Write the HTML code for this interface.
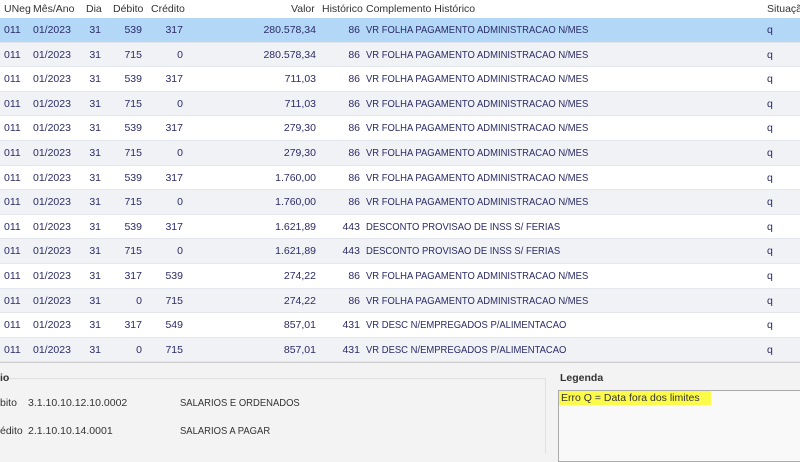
<!DOCTYPE html>
<html><head><style>
body{margin:0;width:800px;height:454px;overflow:hidden;background:#f3f3f3;font-family:"Liberation Sans",sans-serif;font-size:10.5px;color:#2b2b66;position:relative}
.hdr{position:absolute;left:0;top:0;width:800px;height:18px;background:#fff;color:#333}
.row{position:absolute;left:0;width:800px;height:24.6px;line-height:24.6px;border-bottom:1px solid #e4e6ee;box-sizing:border-box}
.c{position:absolute;white-space:nowrap}
.r{text-align:right}
.sq{transform:scaleX(0.9);transform-origin:left center}
.bot{position:absolute;color:#333;white-space:nowrap}
</style></head><body>
<div class="hdr">
<span class="c" style="left:4px;top:3px">UNeg</span>
<span class="c" style="left:33px;top:3px">Mês/Ano</span>
<span class="c" style="left:86px;top:3px">Dia</span>
<span class="c" style="left:113px;top:3px">Débito</span>
<span class="c" style="left:151px;top:3px">Crédito</span>
<span class="c" style="left:291px;top:3px">Valor</span>
<span class="c" style="left:322px;top:3px">Histórico</span>
<span class="c" style="left:366px;top:3px">Complemento Histórico</span>
<span class="c" style="left:767px;top:3px">Situação</span>
</div>
<div id="rows"></div>
<script>
var d=[["539","317","280.578,34","86","VR FOLHA PAGAMENTO ADMINISTRACAO N/MES"],["715","0","280.578,34","86","VR FOLHA PAGAMENTO ADMINISTRACAO N/MES"],["539","317","711,03","86","VR FOLHA PAGAMENTO ADMINISTRACAO N/MES"],["715","0","711,03","86","VR FOLHA PAGAMENTO ADMINISTRACAO N/MES"],["539","317","279,30","86","VR FOLHA PAGAMENTO ADMINISTRACAO N/MES"],["715","0","279,30","86","VR FOLHA PAGAMENTO ADMINISTRACAO N/MES"],["539","317","1.760,00","86","VR FOLHA PAGAMENTO ADMINISTRACAO N/MES"],["715","0","1.760,00","86","VR FOLHA PAGAMENTO ADMINISTRACAO N/MES"],["539","317","1.621,89","443","DESCONTO PROVISAO DE INSS S/ FERIAS"],["715","0","1.621,89","443","DESCONTO PROVISAO DE INSS S/ FERIAS"],["317","539","274,22","86","VR FOLHA PAGAMENTO ADMINISTRACAO N/MES"],["0","715","274,22","86","VR FOLHA PAGAMENTO ADMINISTRACAO N/MES"],["317","549","857,01","431","VR DESC N/EMPREGADOS P/ALIMENTACAO"],["0","715","857,01","431","VR DESC N/EMPREGADOS P/ALIMENTACAO"]];
var h="";
d.forEach(function(r,i){var top=18+i*24.6;var bg=i==0?"#b3d7f7":(i%2?"#f1f2f6":"#fff");
h+='<div class="row" style="top:'+top+'px;background:'+bg+'">'+
'<span class="c" style="left:4px">011</span><span class="c" style="left:33px">01/2023</span>'+
'<span class="c r" style="right:699px">31</span><span class="c r" style="right:658px">'+r[0]+'</span>'+
'<span class="c r" style="right:617px">'+r[1]+'</span><span class="c r" style="right:484px">'+r[2]+'</span>'+
'<span class="c r" style="right:440px">'+r[3]+'</span><span class="c sq" style="left:366px">'+r[4]+'</span>'+
'<span class="c" style="left:767px">q</span></div>';});
document.getElementById("rows").innerHTML=h;
</script>
<div style="position:absolute;left:0;top:362px;width:800px;height:1px;background:#ccc"></div>
<div style="position:absolute;left:0;top:378px;width:545px;height:1px;background:#e0e0e0"></div>
<div style="position:absolute;left:545px;top:378px;width:1px;height:76px;background:#e0e0e0"></div>
<span class="bot" style="left:0;top:372px;font-weight:bold">io</span>
<span class="bot" style="left:0;top:397px">bito</span>
<span class="bot" style="left:28px;top:397px">3.1.10.10.12.10.0002</span>
<span class="bot sq" style="left:180px;top:397px">SALARIOS E ORDENADOS</span>
<span class="bot" style="left:0;top:425px">édito</span>
<span class="bot" style="left:28px;top:425px">2.1.10.10.14.0001</span>
<span class="bot sq" style="left:180px;top:425px">SALARIOS A PAGAR</span>
<span class="bot" style="left:560px;top:372px;font-weight:bold">Legenda</span>
<div style="position:absolute;left:558px;top:390px;width:250px;height:70px;border:1px solid #aaa;background:#f9f9f9"></div>
<div style="position:absolute;left:559px;top:391px;width:152px;height:14px;background:#fdfb4a"></div>
<span class="bot" style="left:561px;top:392px;color:#333">Erro Q = Data fora dos limites</span>
</body></html>
